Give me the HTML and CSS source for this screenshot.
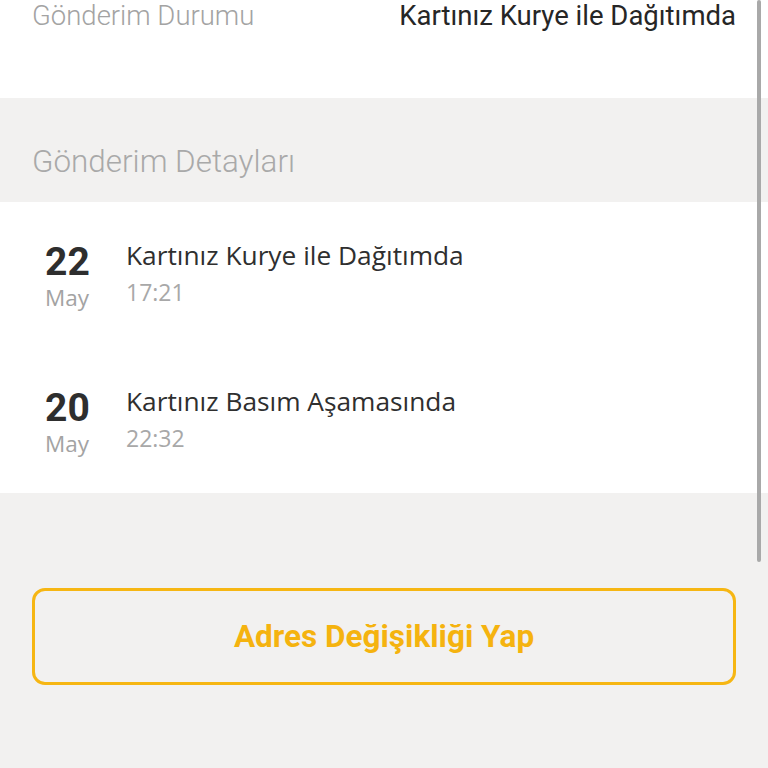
FILE: index.html
```html
<!DOCTYPE html>
<html lang="tr">
<head>
  <meta charset="UTF-8">
  <title>Gönderim Detayları</title>
  <link rel="stylesheet" href="styles.css">
</head>
<body>

<div class="page">

  <!-- Status row -->
  <div class="status">
    <span class="status-label">Gönderim Durumu</span>
    <span class="status-value">Kartınız Kurye ile Dağıtımda</span>
  </div>

  <!-- Section title -->
  <div class="section-title">Gönderim Detayları</div>

  <!-- Timeline -->
  <div class="timeline">
    <div class="event">
      <div class="date">
        <div class="day">22</div>
        <div class="month">May</div>
      </div>
      <div class="info">
        <div class="title">Kartınız Kurye ile Dağıtımda</div>
        <div class="time">17:21</div>
      </div>
    </div>
    <div class="event">
      <div class="date">
        <div class="day">20</div>
        <div class="month">May</div>
      </div>
      <div class="info">
        <div class="title">Kartınız Basım Aşamasında</div>
        <div class="time">22:32</div>
      </div>
    </div>
  </div>

  <div class="actions">
    <button class="btn-outline">Adres Değişikliği Yap</button>
  </div>

  <div class="scrollbar"></div>
</div>

</body>
</html>
```

FILE: styles.css
```css
html, body {
  margin: 0;
  padding: 0;
  height: 100%;
  overflow: hidden;
  background-color: #f2f1f0;
  font-family: Roboto, "Liberation Sans", sans-serif;
}

.page {
  position: relative;
  height: 100%;
}

.status {
  display: flex;
  justify-content: space-between;
  align-items: flex-start;
  height: 98px;
  box-sizing: border-box;
  padding: 0 32px;
  background: #fff;
  font-size: 27.5px;
  line-height: 32px;
}

.status-label {
  color: #a3a3a3;
  font-weight: 300;
}

.status-value {
  color: #262626;
}

.section-title {
  height: 104px;
  box-sizing: border-box;
  padding: 45px 32px 0;
  font-size: 31.4px;
  line-height: 38px;
  font-weight: 300;
  color: #a9a9a9;
}

.timeline {
  background: #fff;
  height: 291px;
  display: flex;
  flex-direction: column;
}

.event {
  flex: 1;
  display: flex;
  padding: 38px 0 0 45px;
  box-sizing: border-box;
}

.date {
  width: 81px;
}

.day {
  font-size: 39px;
  line-height: 44px;
  font-weight: 700;
  color: #2e2e2e;
}

.month {
  font-family: "Open Sans", sans-serif;
  font-size: 22.5px;
  line-height: 28px;
  color: #a3a3a3;
}

.info {
  font-family: "Open Sans", sans-serif;
}

.title {
  font-size: 26.3px;
  line-height: 30px;
  color: #2f2f2f;
}

.time {
  margin-top: 7px;
  font-size: 23px;
  line-height: 30px;
  color: #a8a8a8;
}

.actions {
  padding: 95px 32px 0;
}

.btn-outline {
  display: block;
  width: 100%;
  height: 97px;
  border: 3px solid #f6b613;
  border-radius: 13px;
  background: transparent;
  font-family: Roboto, sans-serif;
  font-size: 31.5px;
  font-weight: 700;
  color: #f5b30f;
}

.scrollbar {
  position: absolute;
  top: 0;
  right: 7px;
  width: 4px;
  height: 562px;
  background: #a9a9a9;
  border-radius: 2px;
}
```
